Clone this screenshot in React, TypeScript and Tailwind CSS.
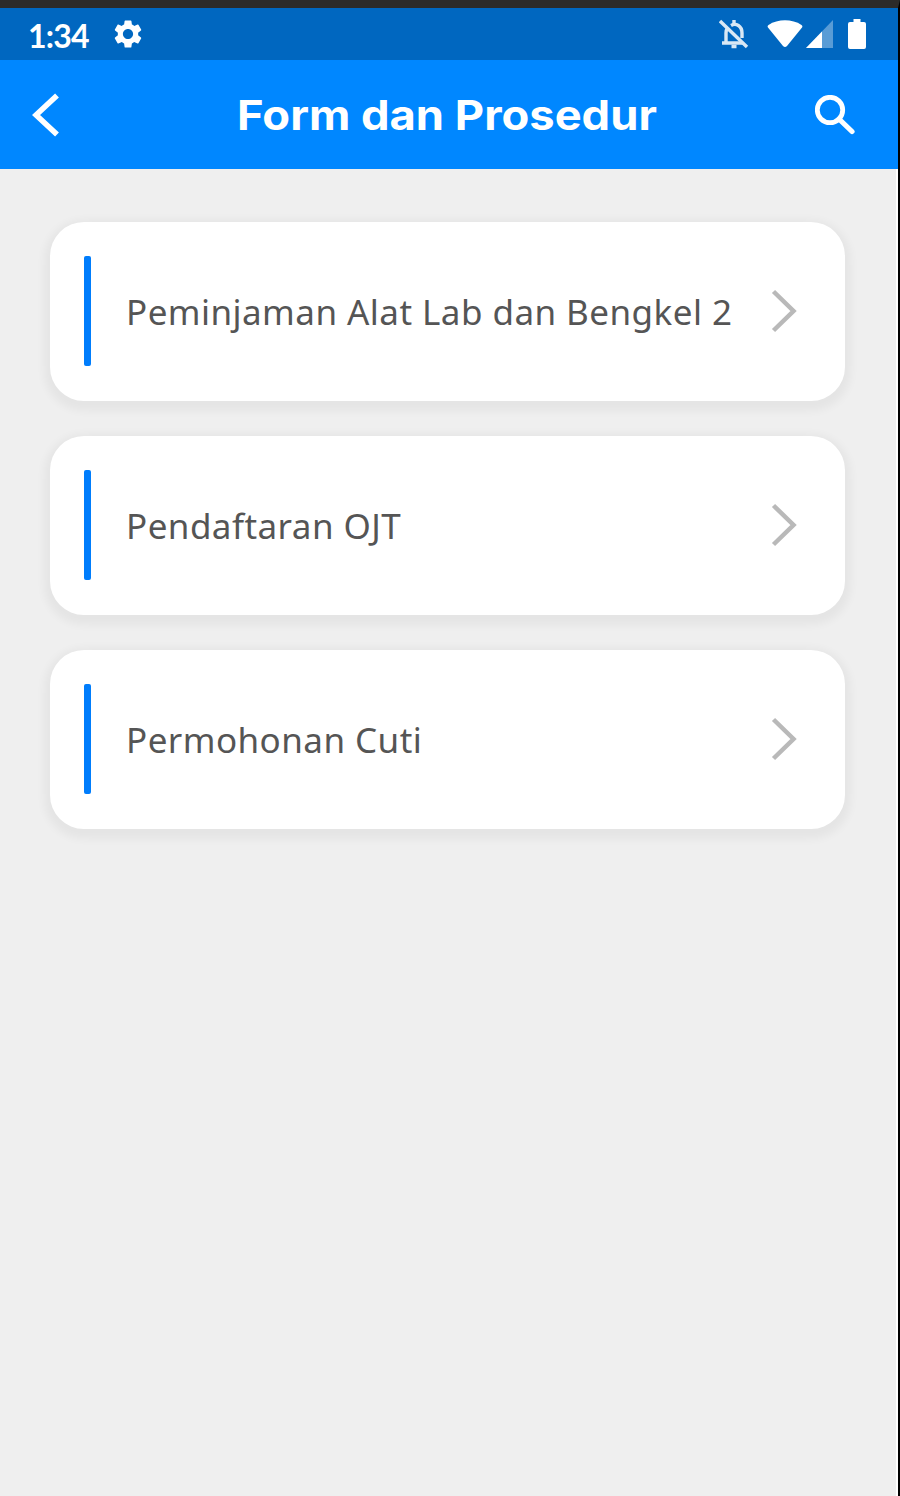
import React from "react";
import { MdSettings } from "react-icons/md";

const forms = [
  { id: 1, title: "Peminjaman Alat Lab dan Bengkel 2" },
  { id: 2, title: "Pendaftaran OJT" },
  { id: 3, title: "Permohonan Cuti" },
];

const StatusBar = () => (
  <div className="flex h-[52px] items-center bg-[#0067c0] pl-[28px] pr-[32px] text-white">
    <span className="w-[83px] whitespace-nowrap pt-[3px] font-['Lato',sans-serif] text-[32px] font-bold leading-none tracking-[-0.8px]">
      1:34
    </span>
    <MdSettings className="size-[34px]" />
    <div className="ml-auto flex items-center">
      <svg className="mr-[18px] opacity-85" width="30" height="30" viewBox="0 0 30 30" fill="none" stroke="currentColor" strokeWidth="3.4">
        <path d="M1 2L28 28" />
        <path d="M3 24H24M7 24V14Q7 11 8.5 9M12 6.5C17 3.5 23 7 23 14V19" />
        <path d="M15 1V5M12.5 27.5H17.5" />
      </svg>
      <svg className="mr-[3px]" width="36" height="28" viewBox="0 0 36 28" fill="currentColor">
        <path d="M1 7.5Q0 6 1.5 5C11-1.2 25-1.2 34.5 5Q36 6 35 7.5L20 26Q18 28 16 26Z" />
      </svg>
      <svg className="mr-[15px]" width="27" height="28" viewBox="0 0 27 28" fill="currentColor">
        <path d="M27 0V28H0Z" opacity="0.35" />
        <path d="M16 11.5V28H0Z" />
      </svg>
      <svg width="18" height="30" viewBox="0 0 18 30" fill="currentColor">
        <path d="M5.5 0H12.5V3H16Q18 3 18 5V28Q18 30 16 30H2Q0 30 0 28V5Q0 3 2 3H5.5Z" />
      </svg>
    </div>
  </div>
);

const Header = () => (
  <header className="flex h-[109px] items-center justify-between bg-[#0087ff] pl-[32px] pr-[43px] text-white">
    <svg width="28" height="44" viewBox="0 0 28 44" fill="none" stroke="currentColor" strokeWidth="5.6">
      <path d="M25 2.5L4 22L25 41.5" />
    </svg>
    <h1 className="ml-[19px] scale-x-[1.105] whitespace-nowrap pt-[2px] font-['Inter',sans-serif] text-[41px] font-bold leading-none">
      Form dan Prosedur
    </h1>
    <svg width="40" height="40" viewBox="0 0 40 40" fill="none" stroke="currentColor" strokeWidth="4.8">
      <circle cx="15" cy="15" r="12.7" />
      <path d="M24 24L37 36.5" strokeWidth="5.2" strokeLinecap="round" />
    </svg>
  </header>
);

const FormCard = ({ title }: { title: string }) => (
  <div className="flex h-[179px] items-center rounded-[34px] bg-white pb-px pl-[34px] pr-[48px] shadow-[0_4px_8px_6px_rgba(0,0,0,0.045)]">
    <div className="h-[110px] w-[7px] rounded-[2px] bg-[#007dfc]" />
    <span className="ml-[35px] whitespace-nowrap font-['Noto_Sans',sans-serif] text-[35px] font-normal leading-none tracking-[0.45px] text-[#555555]">
      {title}
    </span>
    <svg className="ml-auto" width="26" height="44" viewBox="0 0 26 44" fill="none" stroke="#b9b9b9" strokeWidth="4.5">
      <path d="M2.5 2.5L22.5 22L2.5 41.5" />
    </svg>
  </div>
);

const App = () => {
  return (
    <div className="flex h-[1496px] w-[900px] flex-col border-r-2 border-t-[8px] border-r-black border-t-[#2c2b29] bg-[#efefef]">
      <StatusBar />
      <Header />
      <main className="flex flex-1 flex-col gap-[35px] border-r-2 border-white pl-[50px] pr-[51px] pt-[53px]">
        {forms.map((form) => (
          <FormCard key={form.id} title={form.title} />
        ))}
      </main>
    </div>
  );
};

export default App;
